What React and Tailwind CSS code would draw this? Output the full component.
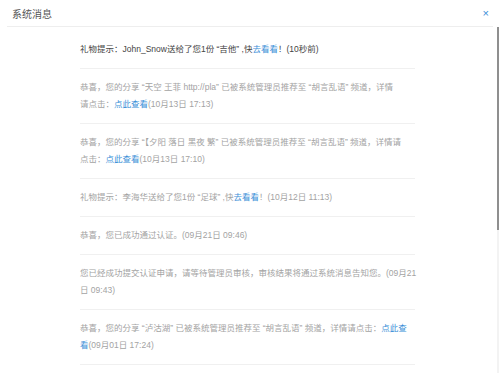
import React from "react";

const B = ({ children }) => <span className="text-[#3a8fd8]">{children}</span>;

const msgs = [
  {
    dark: true,
    content: (
      <>
        礼物提示：John_Snow送给了您1份 “吉他” ,快<B>去看看</B>！(10秒前)
      </>
    ),
  },
  {
    content: (
      <>
        恭喜，您的分享 “天空 王菲 http://pla” 已被系统管理员推荐至 “胡言乱语” 频道，详情
        <br />
        请点击：<B>点此查看</B>(10月13日 17:13)
      </>
    ),
  },
  {
    content: (
      <>
        恭喜，您的分享 “【夕阳 落日 黑夜 繁” 已被系统管理员推荐至 “胡言乱语” 频道，详情请
        <br />
        点击：<B>点此查看</B>(10月13日 17:10)
      </>
    ),
  },
  {
    content: (
      <>
        礼物提示：李海华送给了您1份 “足球” ,快<B>去看看</B>！(10月12日 11:13)
      </>
    ),
  },
  { content: <>恭喜，您已成功通过认证。(09月21日 09:46)</> },
  {
    content: (
      <>
        您已经成功提交认证申请，请等待管理员审核，审核结果将通过系统消息告知您。(09月21
        <br />
        日 09:43)
      </>
    ),
  },
  {
    content: (
      <>
        恭喜，您的分享 “泸沽湖” 已被系统管理员推荐至 “胡言乱语” 频道，详情请点击：<B>点此查</B>
        <br />
        <B>看</B>(09月01日 17:24)
      </>
    ),
  },
];

export default function App() {
  return (
    <div
      className="w-[500px] h-[373px] bg-white overflow-hidden flex flex-col"
      style={{ fontFamily: '"Liberation Sans", "Noto Sans CJK SC", sans-serif' }}
    >
      <div className="h-[27px] mx-[7px] border-b border-[#eeeeee] flex items-center justify-between shrink-0">
        <span className="pl-[5px] text-[10px] text-[#555]" style={{ fontFamily: '"Noto Sans CJK SC", sans-serif' }}>
          系统消息
        </span>
        <span className="pr-[4px] text-[11px] leading-none text-[#3a8fd8]">×</span>
      </div>
      <div className="flex-1 flex min-h-0">
        <div className="flex-1 pl-[80px] pt-[4px]">
          <div className="w-[335px]">
            {msgs.map((m, i) => (
              <div
                key={i}
                className={`py-[10px] border-b border-[#f0f0f0] text-[8.5px] leading-[17px] whitespace-nowrap ${
                  m.dark ? "text-[#444]" : "text-[#a3a3a3]"
                }`}
              >
                {m.content}
              </div>
            ))}
          </div>
        </div>
        <div className="w-[2px] mr-[1px] flex flex-col bg-[#f3f3f3]">
          <div className="h-[203px] bg-[#8f8f8f]" />
        </div>
      </div>
    </div>
  );
}
